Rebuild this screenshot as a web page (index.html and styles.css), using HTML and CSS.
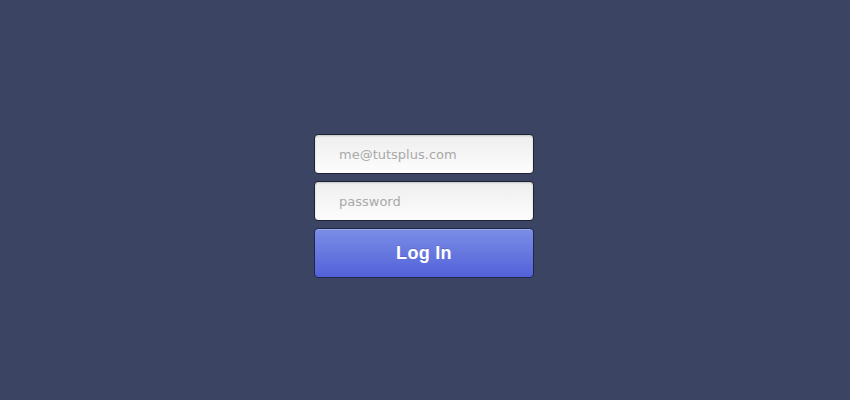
FILE: index.html
```html
<!DOCTYPE html>
<html lang="en">
<head>
<meta charset="utf-8">
<title>Login</title>
<link rel="stylesheet" href="styles.css">
</head>
<body>
<main class="page">
  <form class="login">
    <input class="field" type="email" placeholder="me@tutsplus.com">
    <input class="field" type="password" placeholder="password">
    <button class="btn" type="button">Log In</button>
  </form>
</main>
</body>
</html>
```

FILE: styles.css
```css
html, body {
  margin: 0;
  padding: 0;
  height: 100%;
}
body {
  background: #3b4563;
  font-family: "DejaVu Sans", sans-serif;
}
.page {
  height: 400px;
  display: flex;
  justify-content: center;
  padding-top: 134px;
  box-sizing: border-box;
  padding-right: 2px;
}
.login {
  display: flex;
  flex-direction: column;
  gap: 7px;
  width: 220px;
}
.field {
  box-sizing: border-box;
  width: 220px;
  height: 40px;
  margin: 0;
  border: 1px solid #1e2336;
  border-radius: 4px;
  padding: 0 10px 0 24px;
  font-family: "DejaVu Sans", sans-serif;
  font-size: 13px;
  color: #555;
  background: linear-gradient(#eeeeee, #fdfdfd);
  box-shadow: inset 0 1px 2px rgba(0,0,0,0.18);
  outline: none;
}
.field::placeholder {
  color: #a9a9a9;
}
.btn {
  box-sizing: border-box;
  width: 220px;
  height: 50px;
  margin: 0;
  border: 1px solid #202646;
  border-radius: 4px;
  background: linear-gradient(#7b8ee6, #5361d9);
  box-shadow: inset 0 1px 0 rgba(255,255,255,0.25);
  color: #fff;
  font-family: "Liberation Sans", Arial, sans-serif;
  font-weight: bold;
  font-size: 18px;
  letter-spacing: 0.3px;
  text-shadow: 0 -1px 0 rgba(0,0,0,0.15);
  cursor: pointer;
}
```
